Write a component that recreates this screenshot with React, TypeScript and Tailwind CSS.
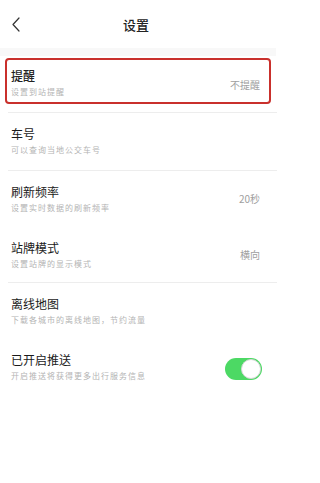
import React from "react";

type Row = {
  title: string;
  sub: string;
  value?: string;
  toggle?: boolean;
  divider?: boolean;
  h: string;
};

const rows: Row[] = [
  { title: "车号", sub: "可以查询当地公交车号", divider: true, h: "h-[58px]" },
  { title: "刷新频率", sub: "设置实时数据的刷新频率", value: "20秒", h: "h-[56px]" },
  { title: "站牌模式", sub: "设置站牌的显示模式", value: "横向", divider: true, h: "h-[56px]" },
  { title: "离线地图", sub: "下载各城市的离线地图，节约流量", h: "h-[56px]" },
  { title: "已开启推送", sub: "开启推送将获得更多出行服务信息", toggle: true, h: "h-[56px]" },
];

function Toggle() {
  return (
    <div className="w-[37px] h-[22px] rounded-full bg-[#4cd964] flex items-center justify-end p-[1px]">
      <div className="w-[20px] h-[20px] rounded-full bg-white border border-[#d6d6d6]" />
    </div>
  );
}

export default function App() {
  return (
    <div
      className="w-[282px] h-[483px] bg-white overflow-hidden"
      style={{ fontFamily: '"Noto Sans CJK SC", "Noto Sans", sans-serif' }}
    >
      {/* Header */}
      <div className="h-[48px] grid grid-cols-[1fr_auto_1fr] items-center pr-[10px]">
        <div className="pl-[12px] pt-[1px]">
          <svg width="8" height="15" viewBox="0 0 8 15" fill="none">
            <path d="M7 1L1 7.5L7 14" stroke="#333" strokeWidth="1.2" strokeLinecap="round" strokeLinejoin="round" />
          </svg>
        </div>
        <div className="text-[13px] font-medium text-[#222] leading-none">设置</div>
        <div />
      </div>
      <div className="h-[8px] mr-[6px] bg-[#f8f8f8]" />

      {/* Highlighted reminder row */}
      <div className="mt-[2px] mx-[5px] w-[266px] h-[46px] border-2 border-[#c9302c] rounded-[4px] flex items-start justify-between pl-[4px] pr-[9px]">
        <div className="pt-[9px]">
          <div className="text-[12px] leading-[14px] font-medium text-[#222]">提醒</div>
          <div className="mt-[4px] text-[8px] leading-[10px] tracking-[1px] text-[#b4b4b4]">设置到站提醒</div>
        </div>
        <div className="pt-[19px] text-[10px] leading-[12px] text-[#a0a0a0]">不提醒</div>
      </div>
      <div className="mt-[8px] ml-[8px] mr-[5px] h-px bg-[#ededed]" />

      {rows.map((r) => (
        <div key={r.title} className={r.h + " flex flex-col"}>
          <div className="flex-1 flex items-center justify-between pl-[11px] pr-[20px]">
            <div className="self-start pt-[14px]">
              <div className="text-[12px] leading-[14px] text-[#1a1a1a]">{r.title}</div>
              <div className="mt-[4px] text-[8px] leading-[10px] tracking-[1px] text-[#b4b4b4] whitespace-nowrap">{r.sub}</div>
            </div>
            {r.value && <div className="pr-[2px] text-[10px] leading-[12px] text-[#a0a0a0]">{r.value}</div>}
            {r.toggle && (
              <div className="pt-[4px]">
                <Toggle />
              </div>
            )}
          </div>
          {r.divider && <div className="ml-[8px] mr-[5px] h-px bg-[#ededed]" />}
        </div>
      ))}
    </div>
  );
}
